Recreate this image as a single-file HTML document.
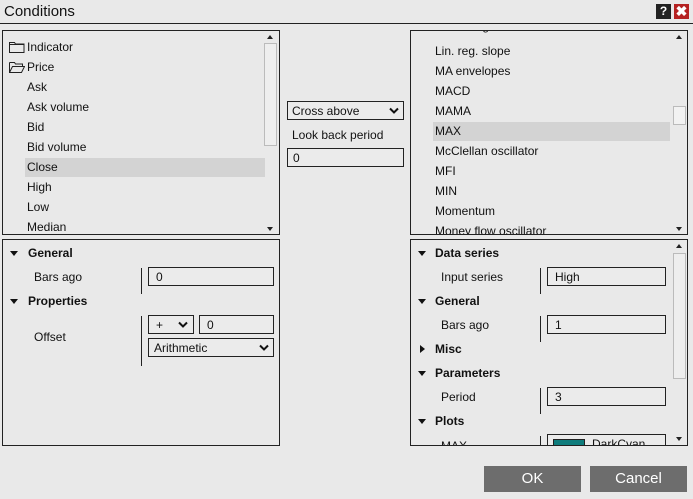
<!DOCTYPE html><html><head><style>
body{margin:0;width:693px;height:499px;background:#e9e9e9;font-family:"Liberation Sans",sans-serif;font-size:12px;color:#111;position:relative;overflow:hidden}
.a{position:absolute}
.box{position:absolute;border:1px solid #222;background:#e9e9e9;overflow:hidden;box-sizing:border-box}
.it{position:absolute;height:19px;line-height:19px;white-space:nowrap}
.hl{background:#d3d3d3}
.inp{position:absolute;border:1px solid #222;height:19px;line-height:19px;padding-left:7px;box-sizing:border-box;background:#ebebeb}
.b{font-weight:bold}
.tri{position:absolute;width:0;height:0;border-left:4px solid transparent;border-right:4px solid transparent;border-top:5px solid #111}
.sep{position:absolute;width:1px;background:#222}
.btn{position:absolute;background:#6d6d6d;color:#fff;font-size:15px;text-align:center;line-height:26px;height:26px}
</style></head><body>
<div class="a" style="left:4px;top:3px;font-size:15px">Conditions</div>
<div class="a" style="left:656px;top:4px;width:15px;height:15px;background:#222;color:#fff;font-weight:bold;font-size:12px;text-align:center;line-height:15px">?</div>
<div class="a" style="left:674px;top:4px;width:15px;height:15px;background:#b52222;color:#fff;font-weight:bold;font-size:14px;text-align:center;line-height:15px">✖</div>
<div class="a" style="left:0;top:23px;width:693px;height:1px;background:#222"></div>

<div class="box" style="left:2px;top:30px;width:278px;height:205px">
<svg class="a" style="left:6px;top:10px" width="16" height="12"><path d="M0.5 1.5h5l1 1.5h8.5v8.5h-14.5z M0.5 3.5h15" fill="none" stroke="#222"/></svg>
<div class="it" style="left:24px;top:7px">Indicator</div>
<svg class="a" style="left:6px;top:30px" width="16" height="12"><path d="M0.5 1.5h5l1 1.5h7v2 M0.5 1.5v10h12l3-6h-12l-3 6" fill="none" stroke="#222"/></svg>
<div class="it" style="left:24px;top:27px">Price</div>
<div class="it" style="left:24px;top:47px">Ask</div>
<div class="it" style="left:24px;top:67px">Ask volume</div>
<div class="it" style="left:24px;top:87px">Bid</div>
<div class="it" style="left:24px;top:107px">Bid volume</div>
<div class="it hl" style="left:22px;top:127px;width:238px;padding-left:2px">Close</div>
<div class="it" style="left:24px;top:147px">High</div>
<div class="it" style="left:24px;top:167px">Low</div>
<div class="it" style="left:24px;top:187px">Median</div>
<div class="a" style="left:261px;top:12px;width:13px;height:103px;border:1px solid #bbb;box-sizing:border-box;background:#eee"></div>
<div class="a" style="left:264px;top:4px;border-left:3px solid transparent;border-right:3px solid transparent;border-bottom:4px solid #222"></div>
<div class="a" style="left:264px;top:196px;border-left:3px solid transparent;border-right:3px solid transparent;border-top:4px solid #222"></div>
</div>

<div class="inp" style="left:287px;top:101px;width:117px;padding-left:4px">Cross above<svg class="a" style="left:101px;top:5px" width="10" height="8"><path d="M1 1.5l4 4 4-4" fill="none" stroke="#111" stroke-width="2"/></svg></div>
<div class="a" style="left:292px;top:128px">Look back period</div>
<div class="inp" style="left:287px;top:148px;width:117px;padding-left:5px">0</div>

<div class="box" style="left:410px;top:30px;width:278px;height:205px">
<div class="it" style="left:24px;top:-14px">Linear regression</div>
<div class="it" style="left:24px;top:11px">Lin. reg. slope</div>
<div class="it" style="left:24px;top:31px">MA envelopes</div>
<div class="it" style="left:24px;top:51px">MACD</div>
<div class="it" style="left:24px;top:71px">MAMA</div>
<div class="it hl" style="left:22px;top:91px;width:235px;padding-left:2px">MAX</div>
<div class="it" style="left:24px;top:111px">McClellan oscillator</div>
<div class="it" style="left:24px;top:131px">MFI</div>
<div class="it" style="left:24px;top:151px">MIN</div>
<div class="it" style="left:24px;top:171px">Momentum</div>
<div class="it" style="left:24px;top:191px">Money flow oscillator</div>
<div class="a" style="left:262px;top:75px;width:13px;height:19px;border:1px solid #bbb;box-sizing:border-box;background:#f2f2f2"></div>
<div class="a" style="left:265px;top:4px;border-left:3px solid transparent;border-right:3px solid transparent;border-bottom:4px solid #222"></div>
<div class="a" style="left:265px;top:196px;border-left:3px solid transparent;border-right:3px solid transparent;border-top:4px solid #222"></div>
</div>

<div class="box" style="left:2px;top:239px;width:278px;height:207px">
<div class="tri" style="left:7px;top:11px"></div><div class="it b" style="left:25px;top:4px">General</div>
<div class="it" style="left:31px;top:28px">Bars ago</div>
<div class="sep" style="left:138px;top:28px;height:26px"></div>
<div class="inp" style="left:145px;top:27px;width:126px">0</div>
<div class="tri" style="left:7px;top:59px"></div><div class="it b" style="left:25px;top:52px">Properties</div>
<div class="sep" style="left:138px;top:76px;height:50px"></div>
<div class="it" style="left:31px;top:88px">Offset</div>
<div class="inp" style="left:145px;top:75px;width:46px">+<svg class="a" style="left:29px;top:5px" width="10" height="8"><path d="M1 1.5l4 4 4-4" fill="none" stroke="#111" stroke-width="2"/></svg></div>
<div class="inp" style="left:196px;top:75px;width:75px">0</div>
<div class="inp" style="left:145px;top:98px;width:126px;padding-left:5px">Arithmetic<svg class="a" style="left:110px;top:5px" width="10" height="8"><path d="M1 1.5l4 4 4-4" fill="none" stroke="#111" stroke-width="2"/></svg></div>
</div>

<div class="box" style="left:410px;top:239px;width:278px;height:207px">
<div class="tri" style="left:7px;top:11px"></div><div class="it b" style="left:24px;top:4px">Data series</div>
<div class="it" style="left:30px;top:28px">Input series</div>
<div class="sep" style="left:129px;top:28px;height:26px"></div>
<div class="inp" style="left:136px;top:27px;width:119px">High</div>
<div class="tri" style="left:7px;top:59px"></div><div class="it b" style="left:24px;top:52px">General</div>
<div class="it" style="left:30px;top:76px">Bars ago</div>
<div class="sep" style="left:129px;top:76px;height:26px"></div>
<div class="inp" style="left:136px;top:75px;width:119px">1</div>
<div class="a" style="left:9px;top:105px;border-top:4px solid transparent;border-bottom:4px solid transparent;border-left:5px solid #111"></div><div class="it b" style="left:24px;top:100px">Misc</div>
<div class="tri" style="left:7px;top:131px"></div><div class="it b" style="left:24px;top:124px">Parameters</div>
<div class="it" style="left:30px;top:148px">Period</div>
<div class="sep" style="left:129px;top:148px;height:26px"></div>
<div class="inp" style="left:136px;top:147px;width:119px">3</div>
<div class="tri" style="left:7px;top:179px"></div><div class="it b" style="left:24px;top:172px">Plots</div>
<div class="it" style="left:30px;top:197px">MAX</div>
<div class="sep" style="left:129px;top:196px;height:12px"></div>
<div class="inp" style="left:136px;top:194px;width:119px"><div class="a" style="left:5px;top:4px;width:30px;height:12px;background:#0f7c7c;border:1px solid #222"></div><span style="position:absolute;left:44px">DarkCyan</span></div>
<div class="a" style="left:262px;top:13px;width:13px;height:126px;border:1px solid #bbb;box-sizing:border-box;background:#eee"></div>
<div class="a" style="left:265px;top:4px;border-left:3px solid transparent;border-right:3px solid transparent;border-bottom:4px solid #222"></div>
<div class="a" style="left:265px;top:197px;border-left:3px solid transparent;border-right:3px solid transparent;border-top:4px solid #222"></div>
</div>

<div class="btn" style="left:484px;top:466px;width:97px">OK</div>
<div class="btn" style="left:590px;top:466px;width:97px">Cancel</div>
</body></html>
